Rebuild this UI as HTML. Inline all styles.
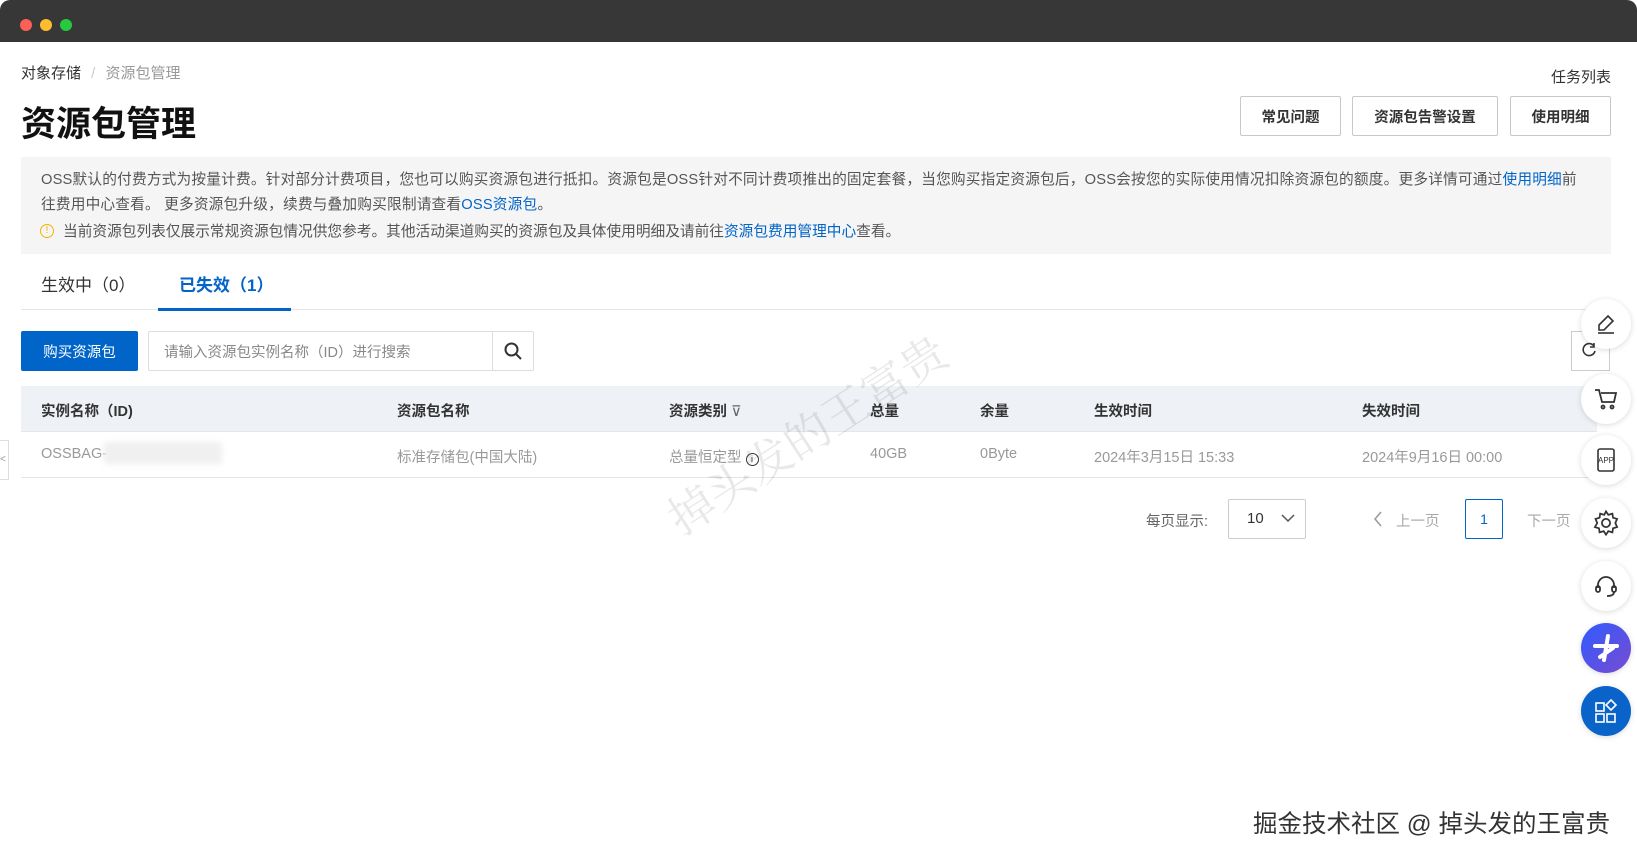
<!DOCTYPE html>
<html><head><meta charset="utf-8"><style>
*{margin:0;padding:0;box-sizing:border-box}
body{width:1637px;height:860px;overflow:hidden;background:#fff;font-family:"Liberation Sans","Noto Sans CJK SC",sans-serif;color:#333;position:relative;font-size:14px}
.a{position:absolute;white-space:nowrap}
.tb{left:0;top:0;width:1637px;height:42px;background:#373737;border-radius:10px 10px 0 0}
.dot{width:12px;height:12px;border-radius:50%;top:19px}
.btn{border:1px solid #c8c8c8;background:#fff;height:40px;top:96px;font-size:14.5px;font-weight:bold;color:#333;display:flex;align-items:center;justify-content:center;border-radius:2px}
.lnk{color:#0064c8}
.th{font-weight:bold;color:#333;top:400px;font-size:14.5px}
.td{color:#999;top:446px;font-size:14.5px}
.fc{width:50px;height:50px;border-radius:50%;background:#fff;box-shadow:0 1px 6px rgba(0,0,0,.15);left:1581px;display:flex;align-items:center;justify-content:center}
</style></head><body>
<div class="a tb"></div>
<div class="a dot" style="left:20px;background:#fe5f57"></div>
<div class="a dot" style="left:40px;background:#febc2e"></div>
<div class="a dot" style="left:60px;background:#28c840"></div>

<div class="a" style="left:21px;top:62px;font-size:15px;color:#333">对象存储 <span style="color:#ccc;margin:0 6px">/</span> <span style="color:#999">资源包管理</span></div>
<div class="a" style="left:1551px;top:66px;font-size:15px;color:#333">任务列表</div>
<div class="a" style="left:21px;top:96px;font-size:35px;font-weight:bold;color:#111">资源包管理</div>
<div class="a btn" style="left:1240px;width:101px">常见问题</div>
<div class="a btn" style="left:1352px;width:146px">资源包告警设置</div>
<div class="a btn" style="left:1510px;width:101px">使用明细</div>

<div class="a" style="left:21px;top:157px;width:1590px;height:97px;background:#f5f5f5"></div>
<div class="a" style="left:41px;top:168px;font-size:14.7px;color:#555;line-height:25px;letter-spacing:0.17px">OSS默认的付费方式为按量计费。针对部分计费项目，您也可以购买资源包进行抵扣。资源包是OSS针对不同计费项推出的固定套餐，当您购买指定资源包后，OSS会按您的实际使用情况扣除资源包的额度。更多详情可通过<span class="lnk">使用明细</span>前<br>往费用中心查看。 更多资源包升级，续费与叠加购买限制请查看<span class="lnk">OSS资源包</span>。</div>
<div class="a" style="left:40px;top:224px;width:14px;height:14px;border:1.3px solid #f5b400;border-radius:50%;color:#f5b400;font-size:10px;line-height:12px;text-align:center">!</div>
<div class="a" style="left:63px;top:220px;font-size:14.7px;color:#555">当前资源包列表仅展示常规资源包情况供您参考。其他活动渠道购买的资源包及具体使用明细及请前往<span class="lnk">资源包费用管理中心</span>查看。</div>

<div class="a" style="left:21px;top:309px;width:1590px;height:1px;background:#e5e5e5"></div>
<div class="a" style="left:41px;top:271px;font-size:17px;color:#333">生效中（0）</div>
<div class="a" style="left:179px;top:271px;font-size:17px;color:#0064c8;font-weight:bold">已失效（1）</div>
<div class="a" style="left:158px;top:308px;width:133px;height:3px;background:#0064c8"></div>

<div class="a" style="left:21px;top:331px;width:117px;height:40px;background:#0064c8;color:#fff;font-size:14.5px;display:flex;align-items:center;justify-content:center;border-radius:2px">购买资源包</div>
<div class="a" style="left:148px;top:331px;width:386px;height:40px;border:1px solid #ddd;border-radius:2px"></div>
<div class="a" style="left:492px;top:331px;width:1px;height:40px;background:#ddd"></div>
<div class="a" style="left:164px;top:341px;color:#888;font-size:14.5px">请输入资源包实例名称（ID）进行搜索</div>
<svg class="a" style="left:503px;top:341px" width="20" height="20" viewBox="0 0 20 20"><circle cx="8.5" cy="8.5" r="6" fill="none" stroke="#333" stroke-width="2"/><path d="M13 13l5 5" stroke="#333" stroke-width="2"/></svg>

<div class="a" style="left:21px;top:386px;width:1576px;height:45px;background:#eef1f6"></div>
<div class="a" style="left:21px;top:477px;width:1576px;height:1px;background:#e5e5e5"></div>
<div class="a" style="left:21px;top:431px;width:1576px;height:1px;background:#e5e5e5"></div>
<div class="a th" style="left:41px">实例名称（ID)</div>
<div class="a th" style="left:397px">资源包名称</div>
<div class="a th" style="left:669px">资源类别 <span style="font-weight:normal;color:#666">⊽</span></div>
<div class="a th" style="left:870px">总量</div>
<div class="a th" style="left:980px">余量</div>
<div class="a th" style="left:1094px">生效时间</div>
<div class="a th" style="left:1362px">失效时间</div>
<div class="a td" style="left:41px">OSSBAG-</div>
<div class="a" style="left:104px;top:442px;width:118px;height:22px;background:#f0f0f0;filter:blur(3px)"></div>
<div class="a td" style="left:397px">标准存储包(中国大陆)</div>
<div class="a td" style="left:669px">总量恒定型 <span style="display:inline-block;width:13px;height:13px;border:1px solid #333;border-radius:50%;font-size:9px;line-height:11px;text-align:center;color:#333">i</span></div>
<div class="a td" style="left:870px">40GB</div>
<div class="a td" style="left:980px">0Byte</div>
<div class="a td" style="left:1094px">2024年3月15日 15:33</div>
<div class="a td" style="left:1362px">2024年9月16日 00:00</div>

<div class="a" style="left:1146px;top:510px;color:#666;font-size:14.5px">每页显示:</div>
<div class="a" style="left:1228px;top:499px;width:78px;height:40px;border:1px solid #ccc;border-radius:2px"></div>
<div class="a" style="left:1247px;top:510px;color:#333;font-size:15px">10</div>
<svg class="a" style="left:1280px;top:512px" width="16" height="12"><path d="M2 3l6 6 6-6" fill="none" stroke="#555" stroke-width="1.5"/></svg>
<svg class="a" style="left:1372px;top:510px" width="12" height="18"><path d="M9 2L3 9l6 7" fill="none" stroke="#999" stroke-width="1.5"/></svg>
<div class="a" style="left:1396px;top:510px;color:#aaa;font-size:14.5px">上一页</div>
<div class="a" style="left:1465px;top:499px;width:38px;height:40px;border:1px solid #0064c8;border-radius:2px;color:#0064c8;text-align:center;line-height:38px">1</div>
<div class="a" style="left:1527px;top:510px;color:#aaa;font-size:14.5px">下一页</div>

<div class="a" style="left:0;top:440px;width:9px;height:40px;border:1px solid #ddd;border-left:0;background:#fff;font-size:10px;color:#999;line-height:38px">&lt;</div>

<div class="a" style="left:645px;top:400px;font-size:46px;color:rgba(0,0,0,.09);transform:rotate(-33deg);font-family:'Noto Serif CJK SC',serif">掉头发的王富贵</div>

<div class="a" style="left:1571px;top:331px;width:39px;height:40px;border:1px solid #ccc;background:#fff"></div>
<div class="a fc" style="top:299px"><svg width="24" height="24" viewBox="0 0 24 24" fill="none" stroke="#333" stroke-width="1.6"><path d="M14 4l5 5-9 9H5v-5z"/><path d="M4 21h16"/></svg></div>
<svg class="a" style="left:1582px;top:342px" width="16" height="16" viewBox="0 0 16 16" fill="none" stroke="#333" stroke-width="1.6"><path d="M12 4a6 6 0 1 0 1 5"/><path d="M12 1v4H8"/></svg>
<div class="a fc" style="top:374px"><svg width="26" height="26" viewBox="0 0 26 26" fill="none" stroke="#333" stroke-width="1.8"><path d="M2 4h4l3 12h12l2-9H8"/><circle cx="10" cy="21" r="1.5"/><circle cx="19" cy="21" r="1.5"/></svg></div>
<div class="a fc" style="top:435px"><svg width="26" height="26" viewBox="0 0 26 26" fill="none" stroke="#333" stroke-width="1.6"><rect x="5" y="2" width="16" height="22" rx="2"/><text x="13" y="16" font-size="8" text-anchor="middle" fill="#333" stroke="none" font-family="Liberation Sans">APP</text></svg></div>
<div class="a fc" style="top:498px"><svg width="28" height="28" viewBox="0 0 24 24" fill="none" stroke="#333" stroke-width="1.5"><circle cx="12" cy="12" r="3.5"/><path d="M12 2l2 3 3.5-1 .5 3.5 3.5 1-1.5 3.5 1.5 3.5-3.5 1-.5 3.5-3.5-1-2 3-2-3-3.5 1-.5-3.5-3.5-1L4.5 12 3 8.5l3.5-1L7 4l3.5 1z"/></svg></div>
<div class="a fc" style="top:561px"><svg width="26" height="26" viewBox="0 0 26 26" fill="none" stroke="#333" stroke-width="1.8"><path d="M5 15v-3a8 8 0 0 1 16 0v3"/><rect x="3" y="13" width="4" height="6" rx="2"/><rect x="19" y="13" width="4" height="6" rx="2"/><path d="M21 19q0 4-7 4"/></svg></div>
<div class="a fc" style="top:623px;background:linear-gradient(135deg,#2e5bff,#7a4bd0)"><svg width="30" height="30" viewBox="0 0 30 30" stroke="#fff" stroke-width="4" stroke-linecap="round"><path d="M17 3l-4 24M4 13h22M9 24l13-9"/></svg></div>
<div class="a fc" style="top:686px;background:#0a63c9"><svg width="26" height="26" viewBox="0 0 26 26" fill="none" stroke="#fff" stroke-width="1.6"><rect x="3" y="5" width="8" height="8"/><rect x="3" y="16" width="8" height="8"/><rect x="14" y="16" width="8" height="8"/><path d="M18 2l5 5-5 5-5-5z"/></svg></div>

<div class="a" style="left:1253px;top:805px;font-size:24.5px;color:#333;text-shadow:0 0 2px #fff,0 0 2px #fff">掘金技术社区 @ 掉头发的王富贵</div>
</body></html>
